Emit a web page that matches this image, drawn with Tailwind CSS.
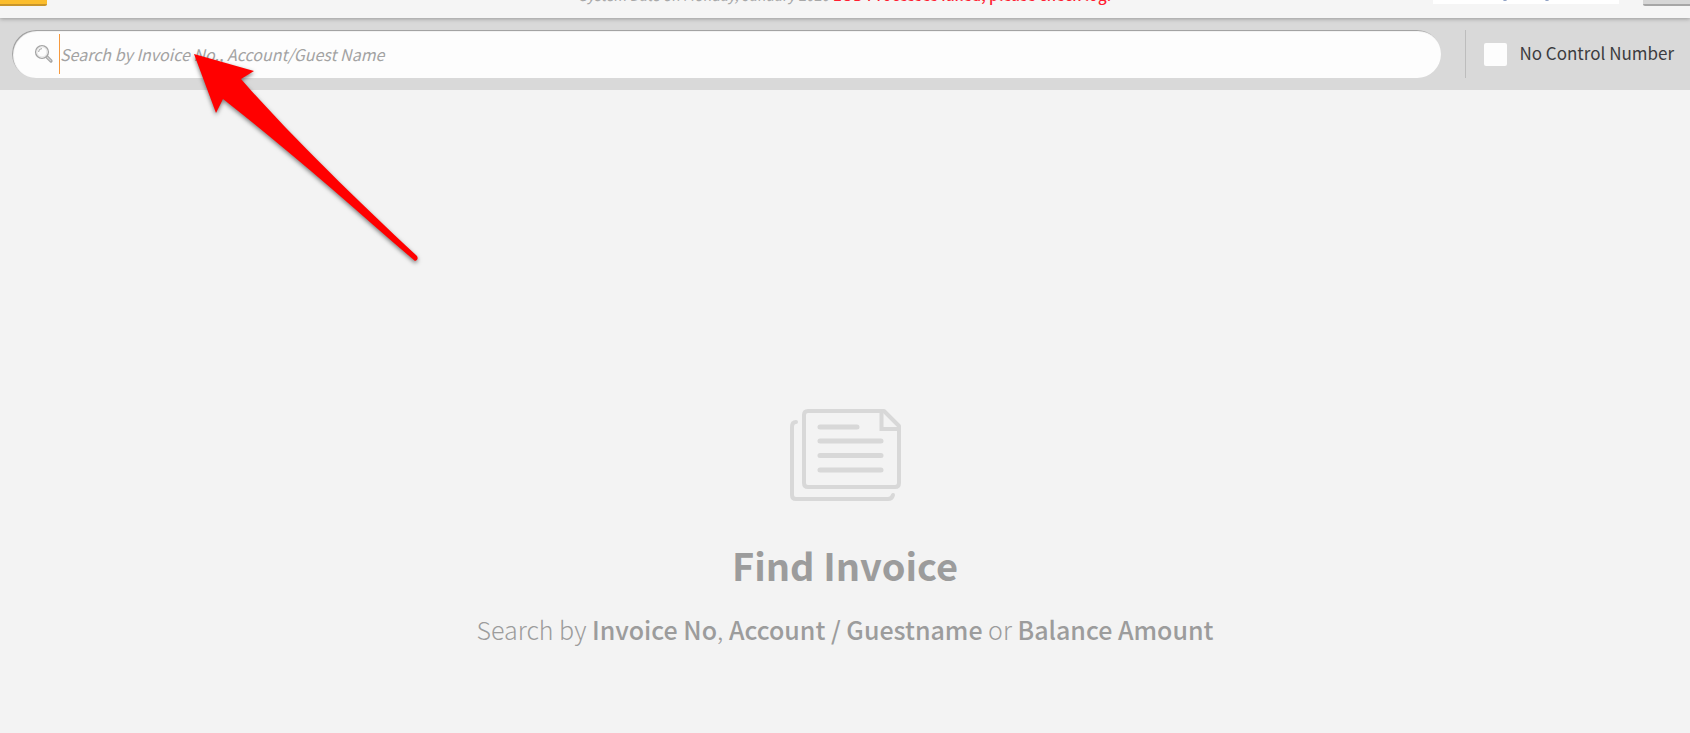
<!DOCTYPE html>
<html lang="en">
  <head>
    <meta charset="UTF-8" />
    <meta name="viewport" content="width=device-width, initial-scale=1.0" />
    <title>Find Invoice</title>
    <script src="https://cdn.jsdelivr.net/npm/@tailwindcss/browser@4"></script>
  </head>
  <body
    class="relative flex min-h-screen flex-col overflow-x-hidden bg-[#f3f3f3] font-['Noto_Sans_CJK_SC','Open_Sans',sans-serif]"
  >
    <!-- Bottom edge of the top bar -->
    <header class="relative flex h-[18px] bg-[#f5f5f5] shadow-[0_1px_4px_#999999]">
      <div class="flex flex-1 items-start">
        <button
          type="button"
          aria-label="Back"
          class="h-[6px] w-[47px] rounded-br-xs border-b-2 border-[#c8952a] bg-[#fbbd2c]"
        ></button>
      </div>
      <div class="flex items-end overflow-hidden pb-[15px]">
        <p class="text-sm leading-4 whitespace-nowrap">
          <em class="text-[#a8a8a8]">System Date on Monday, January 2020</em>
          <strong class="text-[15px] font-medium text-[#ff1e32]"
            >EOD Processes failed, please check log.</strong
          >
        </p>
      </div>
      <div class="flex flex-1 items-start justify-end gap-6">
        <svg class="h-1 w-[186px] bg-white" viewBox="0 0 186 4" fill="none">
          <path
            d="M69 -1.5 Q72 1.500 75 -1.5 M111 -1.5 Q114 1.500 117 -1.5"
            stroke="#5b74a8"
            stroke-width="1.5"
          />
        </svg>
        <button
          type="button"
          aria-label="Menu"
          class="h-[6px] w-[47px] rounded-bl-xs border-b-2 border-[#a6a6a6] bg-[#d6d6d6]"
        ></button>
      </div>
    </header>

    <!-- Search bar -->
    <form class="flex h-[72px] items-center bg-[#d9d9d9] pr-4 pl-3">
      <div
        class="flex h-12 flex-1 items-center rounded-full bg-[#fdfdfd] pl-[22px] shadow-[inset_1px_1px_1px_#999999]"
      >
        <svg class="size-5 shrink-0" viewBox="0 0 20 20" fill="none">
          <path d="M12.5 12.5 L17 17" stroke="#a5a5a5" stroke-width="3.2" stroke-linecap="round" />
          <path d="M13 13 L16.7 16.7" stroke="#d4d4d4" stroke-width="1.2" stroke-linecap="round" />
          <circle cx="8" cy="8" r="6.4" fill="#fdfdfd" stroke="#a5a5a5" stroke-width="1.4" />
          <circle cx="8" cy="8" r="5" stroke="#e4e4e4" stroke-width="1" />
          <path d="M4.6 8 A3.4 3.4 0 0 1 8 4.6" stroke="#a5a5a5" stroke-width="1" />
        </svg>
        <label for="search" class="sr-only">Search invoices</label>
        <input
          type="text"
          id="search"
          name="search"
          placeholder="Search by Invoice No., Account/Guest Name"
          class="ml-[5px] h-10 flex-1 border-l border-[#f79a3e] text-base italic placeholder:text-[#a3a3a3] focus:outline-none"
        />
      </div>
      <div
        class="ml-6 flex h-12 items-center gap-3 border-l border-[#bdbdbd] pl-[18px]"
      >
        <input
          type="checkbox"
          id="noControl"
          name="noControl"
          class="size-[23px] appearance-none rounded-xs bg-[#fdfdfd] checked:bg-[#fbbd2c]"
        />
        <label for="noControl" class="pb-0.5 text-[17px] leading-6 text-[#3c3c40]"
          >No Control Number</label
        >
      </div>
    </form>

    <!-- Empty state -->
    <main
      class="flex flex-1 flex-col items-center justify-end pb-21 text-center text-[#9c9c9c]"
    >
      <svg
        class="h-[92px] w-[111px]"
        viewBox="0 0 111 92"
        fill="none"
        stroke="#d8d8d8"
        stroke-width="4"
        stroke-linecap="round"
        stroke-linejoin="round"
      >
        <path d="M18 2 H94 L109 17 V74 Q109 78 105 78 H18 Q14 78 14 74 V6 Q14 2 18 2 Z" />
        <path d="M91.500 3 V20 H108" stroke-linejoin="miter" />
        <path d="M6 13 Q2 13 2 18 V86 Q2 90 6 90 H98 Q102 90 103 86" />
        <path d="M30 18 H67 M30 32 H91 M30 46.500 H91 M30 61 H91" stroke-width="5" />
      </svg>
      <h1 class="mt-9 text-[38px] leading-[56px] font-bold">Find Invoice</h1>
      <p class="mt-4 text-[25px] leading-10 font-light">
        Search by <b class="font-medium">Invoice No</b>,
        <b class="font-medium">Account / Guestname</b> or
        <b class="font-medium">Balance Amount</b>
      </p>
    </main>

    <!-- Arrow pointing at the search field -->
    <svg
      class="pointer-events-none absolute top-[50px] left-[190px] h-[220px] w-[234px] drop-shadow-[0_2px_2px_rgba(0,0,0,0.5)]"
      viewBox="190 50 234 220"
    >
      <path
        fill="#ff0000"
        d="M194 54 L254 71 L241 79 C290 135 355 198 417 256 Q419 260 415 261 C350 205 290 151 223 99 L216 113 Z"
      />
    </svg>
  </body>
</html>
